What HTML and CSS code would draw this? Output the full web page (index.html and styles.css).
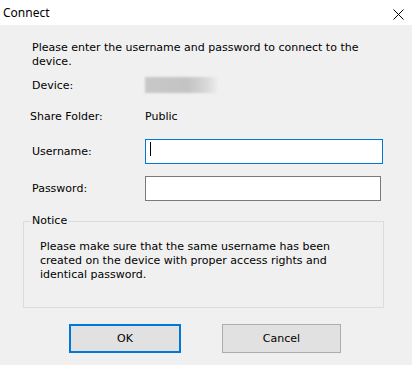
FILE: index.html
```html
<!DOCTYPE html>
<html lang="en">
<head>
  <meta charset="UTF-8" />
  <title>Connect</title>
  <link rel="stylesheet" href="styles.css">
</head>
<body>
  <div class="titlebar">
    <span class="title">Connect</span>
    <svg class="close" width="11" height="11" viewBox="0 0 11 11">
      <path d="M0.5 0.5 L10.5 10.5 M10.5 0.5 L0.5 10.5" stroke="#000" stroke-width="1" fill="none"/>
    </svg>
  </div>

  <div class="content">
    <p class="intro">Please enter the username and password to connect to the device.</p>

    <div class="row row-device">
      <span class="label">Device:</span>
      <span class="blurred"></span>
    </div>
    <div class="row row-share">
      <span class="label">Share Folder:</span>
      <span class="value">Public</span>
    </div>
    <div class="row row-user">
      <label class="label" for="username">Username:</label>
      <div class="input focused" id="username"><span class="caret"></span></div>
    </div>
    <div class="row row-pass">
      <label class="label" for="password">Password:</label>
      <div class="input narrow" id="password"></div>
    </div>

    <fieldset class="notice">
      <legend>Notice</legend>
      <p>Please make sure that the same username has been created on the device with proper access rights and identical password.</p>
    </fieldset>

    <div class="buttons">
      <button class="btn default">OK</button>
      <button class="btn">Cancel</button>
    </div>
  </div>
</body>
</html>
```

FILE: styles.css
```css
body {
  margin: 0;
  background-color: #f0f0f0;
  font-family: "DejaVu Sans", sans-serif;
  font-size: 11px;
  color: #000;
}

.titlebar {
  height: 25px;
  background-color: #ffffff;
  display: flex;
  justify-content: space-between;
  align-items: center;
  padding: 0 8px 0 3px;
}

.title {
  font-family: "Noto Sans", sans-serif;
  font-size: 12px;
}

.close {
  margin-top: 3px;
}

.content {
  padding: 0 28px 0 23px;
}

.intro {
  margin: 16px 0 0 9px;
  line-height: 14px;
  max-width: 362px;
}

.row {
  display: grid;
  grid-template-columns: 113px 1fr;
  align-items: center;
  padding-left: 9px;
}

.row-device {
  margin-top: 8px;
  height: 16px;
}

.row-share {
  margin-top: 15px;
  height: 16px;
}

.row-share .label {
  margin-left: -2px;
}

.row-user {
  margin-top: 15px;
}

.row-pass {
  margin-top: 12px;
}

.blurred {
  width: 72px;
  height: 16px;
  background: linear-gradient(to right, #c8c8c8 0%, #c4c4c4 60%, #d8d8d8 85%, #ececec 100%);
  filter: blur(1px);
}

.input {
  box-sizing: border-box;
  width: 238px;
  height: 25px;
  background-color: #ffffff;
  border: 1px solid #7a7a7a;
  padding: 2px 4px;
}

.input.narrow {
  width: 236px;
}

.input.focused {
  border-color: #0078d7;
}

.caret {
  display: block;
  width: 1px;
  height: 14px;
  background-color: #000;
}

.notice {
  margin: 13px 0 0 0;
  width: 361px;
  height: 94px;
  box-sizing: border-box;
  border: 1px solid #dcdcdc;
  padding: 0 8px 0 7px;
}

.notice legend {
  padding: 0 1px;
  margin-left: 0;
  line-height: 14px;
}

.notice p {
  margin: 12px 0 0 9px;
  line-height: 14px;
}

.buttons {
  display: flex;
  gap: 41px;
  padding-left: 46px;
  margin-top: 16px;
}

.btn {
  box-sizing: border-box;
  width: 119px;
  height: 29px;
  background-color: #e1e1e1;
  border: 1px solid #adadad;
  font-family: "DejaVu Sans", sans-serif;
  font-size: 11px;
  color: #000;
  padding: 0;
}

.btn.default {
  width: 112px;
  border: 2px solid #0078d7;
}
```
